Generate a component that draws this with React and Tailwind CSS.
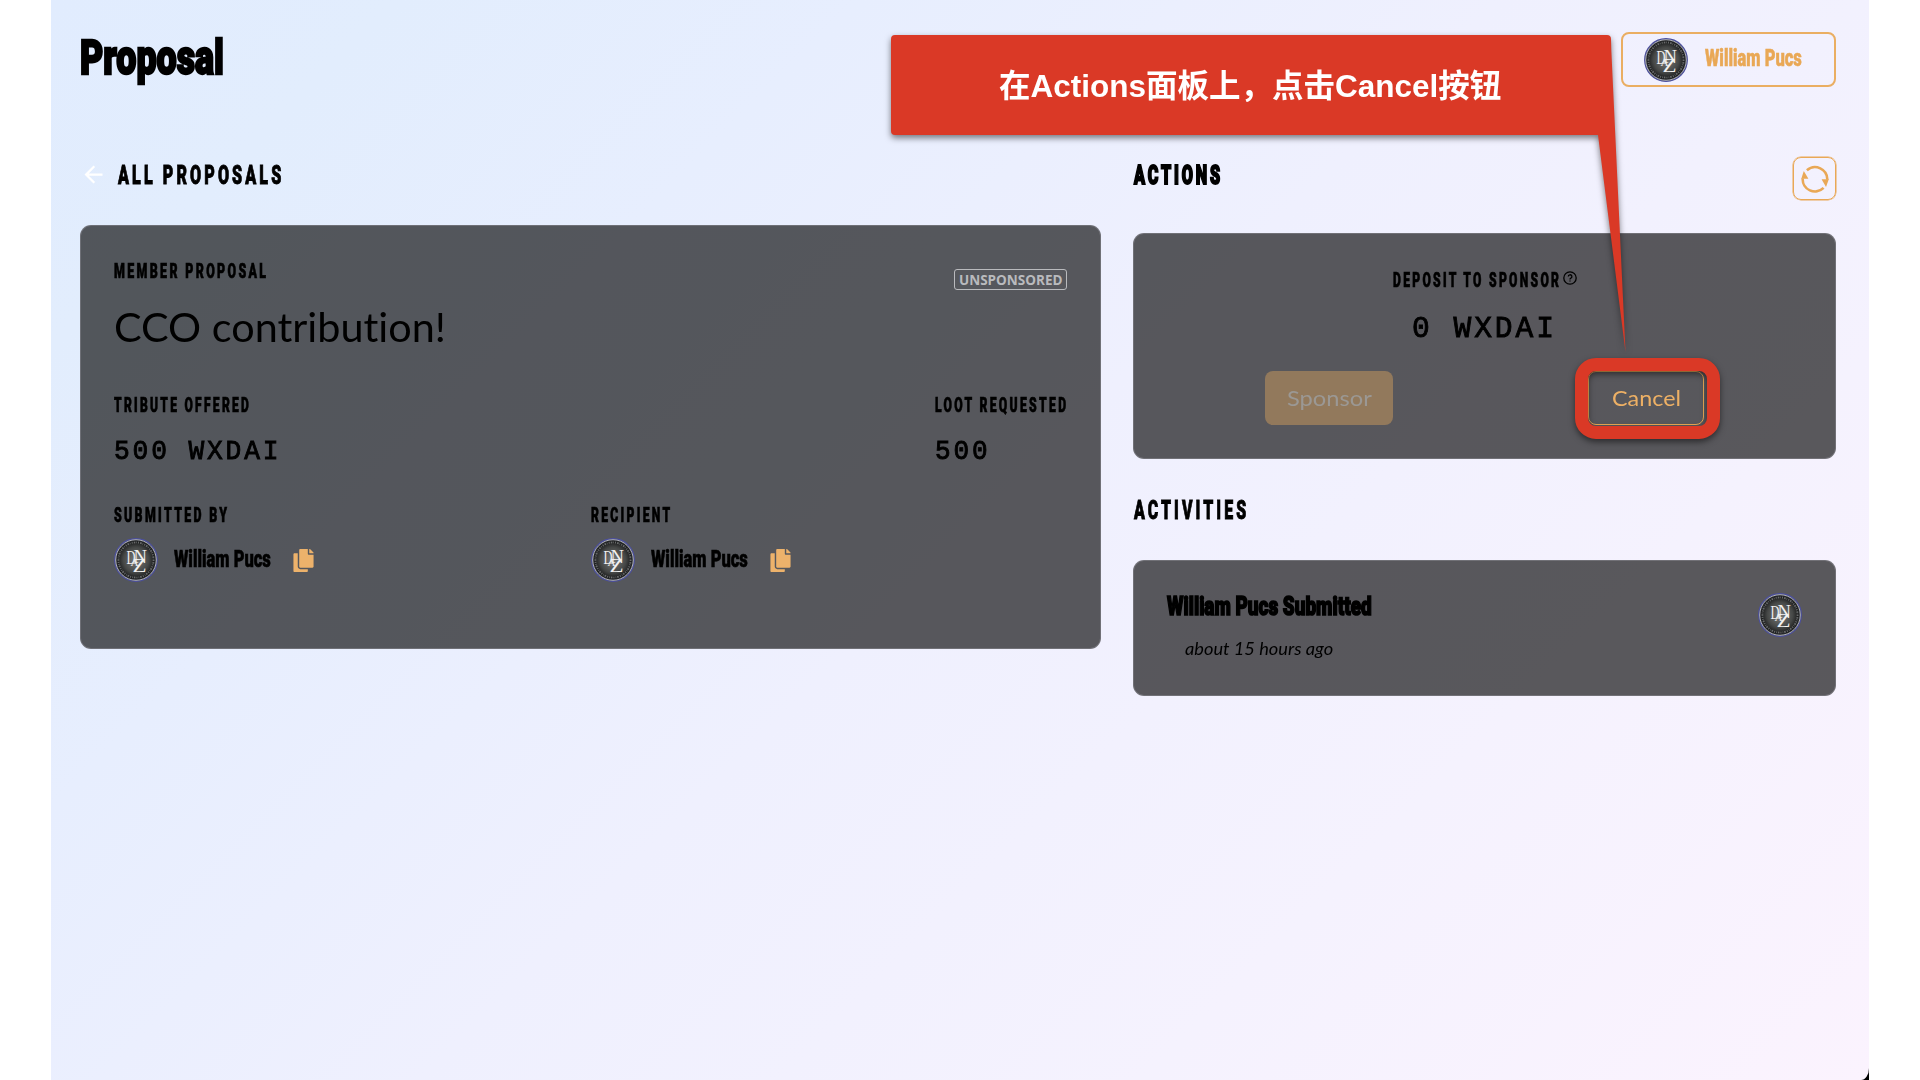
import { useLayoutEffect, useRef } from "react";
import { MdArrowBack } from "react-icons/md";
import { FaCopy } from "react-icons/fa";

/* Text condensed or stretched horizontally to a given width. */
function Fit({ w, spacing = 0, className = "", boxClass = "", children }) {
  const ref = useRef(null);
  useLayoutEffect(() => {
    const apply = () => {
      const el = ref.current;
      if (!el) return;
      el.style.transform = `scaleX(${w / (el.offsetWidth - spacing)})`;
    };
    apply();
    document.fonts?.ready.then(apply);
  }, [w, spacing]);
  return (
    <span className={`block shrink-0 whitespace-nowrap ${boxClass}`} style={{ width: w }}>
      <span
        ref={ref}
        className={`block w-fit origin-left ${className}`}
        style={{ letterSpacing: spacing }}
      >
        {children}
      </span>
    </span>
  );
}

const display = "font-['Roboto',sans-serif] font-black";
const mono = "font-['Liberation_Mono',monospace] [-webkit-text-stroke:0.9px_black]";
const body = "font-['Lato',sans-serif] [font-variant-ligatures:none]";

function Label({ w, children }) {
  return (
    <Fit w={w} spacing={3.8} className={`${display} text-[20px] leading-5 [-webkit-text-stroke:0.7px_black]`}>
      {children}
    </Fit>
  );
}

function Avatar() {
  return (
    <svg viewBox="0 0 44 44" className="block size-[44px] shrink-0">
      <defs>
        <radialGradient id="coin" cx="0.5" cy="0.5" r="0.5">
          <stop offset="0" stopColor="#7a7c7b" />
          <stop offset="0.6" stopColor="#454746" />
          <stop offset="0.85" stopColor="#1d1e1f" />
          <stop offset="1" stopColor="#303233" />
        </radialGradient>
      </defs>
      <circle cx="22" cy="22" r="21.3" fill="url(#coin)" stroke="#4c50a0" strokeWidth="1.2" />
      <circle cx="22" cy="22" r="20.3" fill="none" stroke="#c3c5d0" strokeWidth="0.9" />
      <circle cx="22" cy="22" r="17.6" fill="none" stroke="#9a9c9d" strokeWidth="1.8" strokeDasharray="1 1.1 1.6 0.9 0.7 1.2" opacity="0.6" />
      <g fill="#f1f1f1" fontFamily="Liberation Serif, serif">
        <text x="12.5" y="26" fontSize="18" textLength="9" lengthAdjust="spacingAndGlyphs">D</text>
        <text x="19.5" y="25" fontSize="18" textLength="13.5" lengthAdjust="spacingAndGlyphs">N</text>
        <text x="16.5" y="28" fontSize="11" textLength="8" lengthAdjust="spacingAndGlyphs">A</text>
        <text x="18.5" y="34.4" fontSize="18" textLength="14" lengthAdjust="spacingAndGlyphs">Z</text>
      </g>
    </svg>
  );
}

function Person({ label, w }) {
  return (
    <div>
      <Label w={w}>{label}</Label>
      <div className="mt-[13px] flex items-center">
        <Avatar />
        <Fit w={97} boxClass="ml-4" className={`${display} text-[23px] leading-6 [-webkit-text-stroke:0.6px_black]`}>
          William Pucs
        </Fit>
        <FaCopy className="ml-[21px] size-[23px] text-[#edb26b]" />
      </div>
    </div>
  );
}

function RefreshIcon() {
  return (
    <svg viewBox="0 0 28 28" className="size-7" fill="none" stroke="#e9a856" strokeWidth="2.6">
      <path d="M5.9 5.2A12.3 12.3 0 0 1 26.3 14.8" />
      <path d="M22.6 22.9A12.3 12.3 0 0 1 1.7 13.4" />
      <path d="M20.6 14.3H27.8L25 22Z" fill="#e9a856" stroke="none" />
      <path d="M7.4 13.8H0.3L2.8 6.1Z" fill="#e9a856" stroke="none" />
    </svg>
  );
}

const card = "rounded-[11px] border border-[#8b8c93]/50 bg-[rgba(5,5,5,0.65)]";

export default function App() {
  return (
    <div className="relative h-[1080px] w-[1920px] overflow-hidden bg-white pl-[51px] text-black">
      <div className="h-full w-[1818px] bg-black">
        <div className="h-full rounded-br-[8px_12px] bg-[linear-gradient(135deg,#e1ecfe_0%,#e2edfd_12%,#e7eefe_28%,#eff0fe_50%,#f5f2fe_75%,#fbf3fe_100%)] pl-[29px] pr-[33px]">
          <header className="flex h-[132px] items-start justify-between pt-8">
            <h1 className="pt-[1px]">
              <Fit w={144} className={`${display} text-[49px] leading-[50px] [-webkit-text-stroke:2.4px_black]`}>
                Proposal
              </Fit>
            </h1>
            <div className="flex h-[55px] w-[215px] items-center rounded-lg border-2 border-[#eaae62] pl-[21px]">
              <Avatar />
              <Fit
                w={97}
                boxClass="ml-[17px] -mt-[2px]"
                className={`${display} text-[23px] leading-6 text-[#e9a856] [-webkit-text-stroke:0.5px_#e9a856]`}
              >
                William Pucs
              </Fit>
            </div>
          </header>

          <main className="grid grid-cols-[1021px_703px] gap-8">
            <section>
              <div className="flex h-[93px] pt-[29px]">
                <MdArrowBack className="size-[27px] text-white" />
                <Fit
                  w={163}
                  spacing={5}
                  boxClass="ml-[11px]"
                  className={`${display} text-[26px] leading-7 [-webkit-text-stroke:0.9px_black]`}
                >
                  ALL PROPOSALS
                </Fit>
              </div>
              <div className={`h-[424px] px-[33px] pt-[35px] ${card}`}>
                <div className="flex justify-between">
                  <div>
                    <Label w={152}>MEMBER PROPOSAL</Label>
                    <Fit w={332} boxClass="mt-[21px]" className={`${body} text-[41px] leading-[50px]`}>
                      CCO contribution!
                    </Fit>
                  </div>
                  <div className="mt-[8px] flex h-[21px] w-[113px] items-center justify-center rounded-[3px] border-[1.5px] border-[#b9babd]">
                    <Fit w={103} className="font-['Open_Sans',sans-serif] text-[13.5px] font-bold leading-4 text-[#b9babd]">
                      UNSPONSORED
                    </Fit>
                  </div>
                </div>
                <div className="mt-[43px] flex justify-between">
                  <div>
                    <Label w={135}>TRIBUTE OFFERED</Label>
                    <Fit w={165} spacing={3} boxClass="mt-[22px]" className={`${mono} text-[27.5px] leading-[30px]`}>
                      500 WXDAI
                    </Fit>
                  </div>
                  <div className="pr-[1px]">
                    <Label w={131}>LOOT REQUESTED</Label>
                    <Fit w={53} spacing={3} boxClass="mt-[22px]" className={`${mono} text-[27.5px] leading-[30px]`}>
                      500
                    </Fit>
                  </div>
                </div>
                <div className="mt-[38px] grid grid-cols-2">
                  <Person label="SUBMITTED BY" w={113} />
                  <Person label="RECIPIENT" w={79} />
                </div>
              </div>
            </section>

            <section>
              <div className="flex h-[101px] items-start justify-between pt-[25px]">
                <Fit
                  w={86}
                  spacing={4.6}
                  boxClass="ml-[1px] mt-1"
                  className={`${display} text-[26px] leading-7 [-webkit-text-stroke:2px_black]`}
                >
                  ACTIONS
                </Fit>
                <div className="flex size-[43px] items-center justify-center rounded-lg border border-[#e9a856] ring-[0.5px] ring-[#e9a856]">
                  <RefreshIcon />
                </div>
              </div>
              <div className={`h-[226px] pt-[35px] ${card}`}>
                <div className="flex h-5 justify-center gap-1 pt-[1px]">
                  <Label w={166}>DEPOSIT TO SPONSOR</Label>
                  <svg viewBox="0 0 14 14" className="mt-[1px] size-[14px] shrink-0" fill="none" stroke="black" strokeWidth="1.3">
                    <circle cx="7" cy="7" r="6.2" />
                    <path d="M5.3 5.6a1.8 1.8 0 1 1 2.6 1.6c-.7.3-.9.6-.9 1.2M7 9.4v1.1" />
                  </svg>
                </div>
                <div className="mt-[24px] flex justify-center pr-[3px]">
                  <Fit w={142} spacing={3} className={`${mono} text-[30px] leading-8`}>
                    0&nbsp;WXDAI
                  </Fit>
                </div>
                <div className="mt-[26px] flex justify-between px-[131px]">
                  <button className="flex h-[54px] w-32 items-center justify-center rounded-lg bg-[#92795c]">
                    <Fit w={85} className={`${body} text-[22px] leading-6 text-[#9b9894]`}>Sponsor</Fit>
                  </button>
                  <button className="flex h-[54px] w-[116px] items-center justify-center rounded-lg border border-[#e9a856]">
                    <Fit w={69} className={`${body} text-[22px] leading-6 text-[#edb065]`}>Cancel</Fit>
                  </button>
                </div>
              </div>
              <Fit
                w={112}
                spacing={5}
                boxClass="ml-[1px] mt-[37px]"
                className={`${display} text-[26px] leading-7 [-webkit-text-stroke:0.9px_black]`}
              >
                ACTIVITIES
              </Fit>
              <div className={`mt-[36px] flex h-[136px] justify-between px-[33px] pt-[31px] ${card}`}>
                <div>
                  <Fit w={205} className={`${display} text-[26px] leading-7 [-webkit-text-stroke:1.6px_black]`}>
                    William Pucs Submitted
                  </Fit>
                  <Fit w={148} boxClass="ml-[18px] mt-[19px]" className={`${body} text-[17px] italic leading-5`}>
                    about 15 hours ago
                  </Fit>
                </div>
                <div className="pt-[1px]">
                  <Avatar />
                </div>
              </div>
            </section>
          </main>
        </div>
      </div>

      {/* Instruction callout and highlight frame */}
      <svg
        viewBox="0 0 750 330"
        className="pointer-events-none absolute left-[886px] top-[30px] h-[330px] w-[750px] drop-shadow-[0_3px_3px_rgba(0,0,0,0.5)]"
      >
        <path
          d="M9 5H721Q725 5 725 9L725.3 20L739.5 322L712 105H9Q5 105 5 101V9Q5 5 9 5Z"
          fill="#da3926"
        />
      </svg>
      <div className="absolute left-[890px] top-[36px] flex h-[100px] w-[720px] items-center justify-center">
        <Fit w={502} className="font-['Liberation_Sans','Noto_Sans_CJK_SC',sans-serif] text-[32px] font-bold leading-10 text-white">
          在Actions面板上，点击Cancel按钮
        </Fit>
      </div>
      <div className="pointer-events-none absolute left-[1575px] top-[358px] h-[81px] w-[145px] rounded-[21px] border-[13px] border-[#da3926] drop-shadow-[0_3px_3px_rgba(0,0,0,0.5)]" />
    </div>
  );
}
